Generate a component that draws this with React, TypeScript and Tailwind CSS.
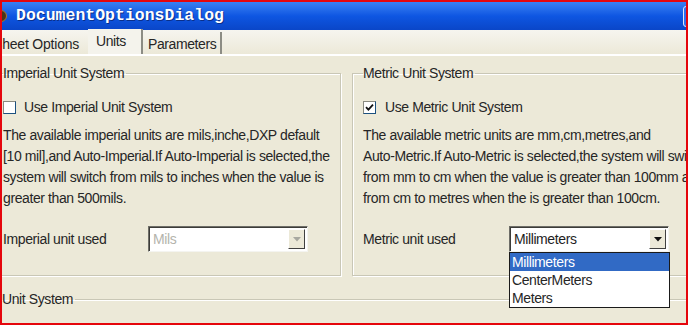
import React from "react";

const imperialLines = [
  "The available imperial units are mils,inche,DXP default",
  "[10 mil],and Auto-Imperial.If Auto-Imperial is selected,the",
  "system will switch from mils to inches when the value is",
  "greater than 500mils.",
];

const metricLines = [
  "The available metric units are mm,cm,metres,and",
  "Auto-Metric.If Auto-Metric is selected,the system will switch",
  "from mm to cm when the value is greater than 100mm and",
  "from cm to metres when the is greater than 100cm.",
];

function Checkbox({ checked }: { checked?: boolean }) {
  return (
    <span className="w-[13px] h-[13px] bg-white border border-[#1c5180] border-t-[#8a8a80] border-l-[#8a8a80] flex items-center justify-center">
      {checked && (
        <svg width="9" height="9" viewBox="0 0 9 9">
          <path d="M1 4.2 L3.4 6.6 L8 1.6" stroke="#111" strokeWidth="1.8" fill="none" />
        </svg>
      )}
    </span>
  );
}

function Combo({ value, disabled }: { value: string; disabled?: boolean }) {
  return (
    <div className="w-[160px] h-[26px] bg-white border border-[#6e6e68] border-b-[#f4f4f0] border-r-[#f4f4f0] shadow-[inset_1px_1px_0_#3c3c38] flex items-center justify-between pl-[4px] pr-[2px]">
      <span className={disabled ? "text-[#b4b4ac]" : "text-[#1e1e1e]"}>{value}</span>
      <span className="w-[17px] h-[20px] bg-[#ece9d8] border border-[#fff] border-b-[#404040] border-r-[#404040] flex items-center justify-center">
        <svg width="8" height="5" viewBox="0 0 8 5">
          <path d="M0 0 H8 L4 4.5 Z" fill={disabled ? "#a8a8a0" : "#111"} />
        </svg>
      </span>
    </div>
  );
}

export default function App() {
  return (
    <div className="w-[690px] h-[328px] bg-white overflow-hidden font-['Liberation_Sans',Arial,sans-serif] text-[14px] tracking-[-0.4px] text-[#262626]">
      <div className="w-[688px] h-[325px] border-2 border-[#e5060c] bg-[#ece9d8] flex flex-col overflow-hidden">
        {/* title bar */}
        <div className="h-[28px] flex-none flex items-center justify-between bg-gradient-to-b from-[#3a80f2] via-[#0e56e2] to-[#0a46c8]">
          <div className="flex items-center">
            <span className="w-[12px] h-[12px] -ml-[7px] rounded-full bg-[#4a3418] border border-[#b07a2a]" />
            <span className="ml-[9px] font-['Liberation_Mono',monospace] font-bold text-[16.5px] tracking-normal text-white [text-shadow:1px_1px_0_#0a2f8a]">
              DocumentOptionsDialog
            </span>
          </div>
          <span className="w-[21px] h-[21px] -mr-[18px] rounded-[3px] border border-[#dfe8fb] bg-[#2e70ee]" />
        </div>

        {/* tabs */}
        <div className="h-[26px] flex-none flex items-end bg-gradient-to-b from-[#f6f5ef] to-[#ece9d8] border-b-2 border-white">
          <div className="-ml-[10px] w-[96px] h-[22px] flex items-center pt-[3px] pl-[1px] tracking-[-0.2px]">Sheet Options</div>
          <div className="w-[55px] h-[25px] flex items-center pl-[8px] bg-[#f4f3ec] border-r-2 border-[#8c8c84]">Units</div>
          <div className="w-[79px] h-[22px] flex items-center pt-[3px] pl-[5px] border-r-2 border-[#8c8c84]">Parameters</div>
        </div>

        {/* panel */}
        <div className="flex-1 flex flex-col pt-[7px]">
          <div className="flex gap-[11px] h-[213px]">
            <fieldset className="-ml-[10px] w-[349px] flex-none border border-[#c9c7b6] shadow-[inset_1px_1px_0_#fff,1px_1px_0_#fff] pl-[10px] pr-[4px]">
              <legend className="pr-[2px]">Imperial Unit System</legend>
              <label className="flex items-center gap-[8px] mt-[15px] h-[17px]">
                <Checkbox />
                <span>Use Imperial Unit System</span>
              </label>
              <div className="mt-[9px] leading-[21px] whitespace-nowrap">
                {imperialLines.map((l) => (
                  <div key={l}>{l}</div>
                ))}
              </div>
              <div className="flex items-center mt-[17px]">
                <span className="w-[145px]">Imperial unit used</span>
                <Combo value="Mils" disabled />
              </div>
            </fieldset>

            <fieldset className="w-[345px] flex-none border border-[#c9c7b6] shadow-[inset_1px_1px_0_#fff,1px_1px_0_#fff] pl-[10px]">
              <legend className="pr-[2px]">Metric Unit System</legend>
              <label className="flex items-center gap-[9px] mt-[15px] h-[17px]">
                <Checkbox checked />
                <span>Use Metric Unit System</span>
              </label>
              <div className="mt-[9px] leading-[21px] whitespace-nowrap">
                {metricLines.map((l) => (
                  <div key={l}>{l}</div>
                ))}
              </div>
              <div className="flex items-center mt-[17px]">
                <span className="w-[146px]">Metric unit used</span>
                <div className="relative">
                  <Combo value="Millimeters" />
                  <div className="absolute left-0 top-[26px] w-[161px] bg-white border border-[#1a1a1a] flex flex-col leading-[18px] z-10">
                    <span className="bg-[#316ac5] text-white pl-[2px]">Millimeters</span>
                    <span className="pl-[2px]">CenterMeters</span>
                    <span className="pl-[2px]">Meters</span>
                  </div>
                </div>
              </div>
            </fieldset>
          </div>

          <fieldset className="-ml-[10px] w-[700px] mt-[13px] flex-1 border-t border-[#c9c7b6] shadow-[inset_0_1px_0_#fff] pl-[10px]">
            <legend className="pr-[2px]">Unit System</legend>
          </fieldset>
        </div>
      </div>
    </div>
  );
}
